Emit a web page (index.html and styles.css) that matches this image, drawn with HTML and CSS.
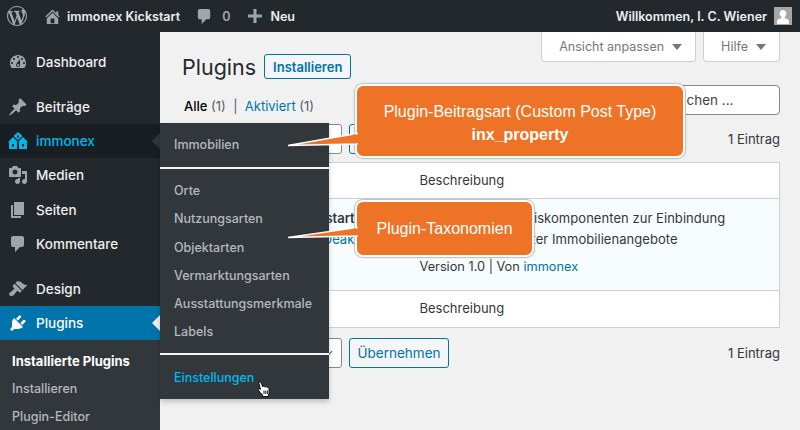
FILE: index.html
```html
<!DOCTYPE html>
<html lang="de">
<head>
<meta charset="UTF-8" />
<meta name="viewport" content="width=device-width, initial-scale=1" />
<title>Plugins - immonex Kickstart</title>
<link rel="stylesheet" href="styles.css">
</head>
<body>

<header class="adminbar">
  <svg class="bar-logo" viewBox="0 0 20 20"><path d="M20 10c0-5.51-4.49-10-10-10C4.48 0 0 4.49 0 10c0 5.52 4.48 10 10 10 5.51 0 10-4.48 10-10zM7.78 15.37L4.37 6.22c.55-.02 1.17-.08 1.17-.08.5-.06.44-1.13-.06-1.11 0 0-1.45.11-2.37.11-.18 0-.37 0-.58-.01C4.12 2.69 6.87 1.11 10 1.11c2.33 0 4.45.87 6.05 2.34-.68-.11-1.65.39-1.65 1.58 0 .74.45 1.36.9 2.1.35.61.55 1.36.55 2.46 0 1.49-1.4 5-1.4 5l-3.03-8.37c.54-.02.82-.17.82-.17.5-.05.44-1.25-.06-1.22 0 0-1.44.12-2.38.12-.87 0-2.33-.12-2.33-.12-.5-.03-.56 1.2-.06 1.22l.92.08 1.26 3.41zM17.41 10c.24-.64.74-1.87.43-4.25.7 1.29 1.05 2.71 1.05 4.25 0 3.29-1.73 6.24-4.4 7.78.97-2.59 1.94-5.2 2.92-7.78zM6.1 18.09C3.12 16.65 1.11 13.53 1.11 10c0-1.3.23-2.48.72-3.59C3.25 10.3 4.67 14.2 6.1 18.09zm4.03-6.63l2.58 6.98c-.86.29-1.76.45-2.71.45-.79 0-1.57-.11-2.29-.33.81-2.38 1.62-4.74 2.42-7.1z"/></svg>
  <svg class="bar-icon home" viewBox="0 0 20 20"><path d="M16 8.5l1.53 1.53-1.06 1.06L10 4.62l-6.47 6.47-1.06-1.06L10 2.5l4 4v-2h2v4zm-6-2.46l6 5.99V18H4v-5.97zM12 17v-5H8v5h4z"/></svg>
  <span class="site-name">immonex Kickstart</span>
  <svg class="bar-icon bubble" viewBox="0 0 20 20"><path d="M5 2h9c1.1 0 2 .9 2 2v7c0 1.1-.9 2-2 2h-2l-5 5v-5H5c-1.1 0-2-.9-2-2V4c0-1.1.9-2 2-2z"/></svg>
  <span class="count">0</span>
  <svg class="bar-icon plus" viewBox="0 0 14 14"><path d="M5.5 0h3v5.500H14v3H8.500V14h-3V8.500H0v-3h5.500z"/></svg>
  <span class="new">Neu</span>
  <span class="welcome">Willkommen, I. C. Wiener</span>
  <span class="avatar">
    <svg viewBox="0 0 18 18"><path d="M9 3c2 0 3.300 1.500 3.300 3.600 0 1.500-.7 2.800-1.700 3.500v1c2 .6 4.400 1.500 4.400 3.100V17H3v-2.800c0-1.600 2.400-2.500 4.400-3.100v-1c-1-.7-1.700-2-1.700-3.500C5.700 4.500 7 3 9 3z"/></svg>
  </span>
</header>

<div class="layout">
  <nav class="sidebar">
    <a class="menu-item">
      <svg viewBox="0 0 20 20"><path d="M3.76 16h12.480c1.100-1.370 1.760-3.110 1.760-5 0-4.420-3.580-8-8-8s-8 3.580-8 8c0 1.890.66 3.630 1.760 5zM10 4c.55 0 1 .45 1 1s-.45 1-1 1-1-.45-1-1 .45-1 1-1zM6 6c.55 0 1 .45 1 1s-.45 1-1 1-1-.45-1-1 .45-1 1-1zm8 0c.55 0 1 .45 1 1s-.45 1-1 1-1-.45-1-1 .45-1 1-1zm-5.370 5.550L12 7v6c0 1.100-.9 2-2 2s-2-.9-2-2c0-.57.24-1.080.63-1.450zM4 10c.55 0 1 .45 1 1s-.45 1-1 1-1-.45-1-1 .45-1 1-1zm12 0c.55 0 1 .45 1 1s-.45 1-1 1-1-.45-1-1 .45-1 1-1zm-5 3c0-.55-.45-1-1-1s-1 .45-1 1 .45 1 1 1 1-.45 1-1z"/></svg>
      Dashboard
    </a>
    <a class="menu-item gap-top">
      <svg viewBox="0 0 20 20"><path d="M10.440 3.020l1.820-1.820 6.360 6.350-1.830 1.820c-1.050-.68-2.480-.57-3.410.36l-.75.75c-.92.93-1.040 2.350-.35 3.410l-1.830 1.820-2.410-2.410-2.800 2.790c-.42.42-3.380 2.710-3.800 2.290s1.860-3.390 2.280-3.810l2.790-2.790L4.100 9.360l1.830-1.820c1.050.69 2.480.57 3.400-.36l.75-.75c.93-.92 1.050-2.350.36-3.410z"/></svg>
      Beiträge
    </a>
    <a class="menu-item hovered">
      <svg class="immonex-logo" viewBox="0 0 20 17"><path fill-rule="evenodd" d="M10 0l4 3.500v1L10 8 6 4.500v-1zM9 3.500v2h2v-2zM5 5l4.500 4.500v.5H9v7H1v-7H.5v-.5zM4 12v2.500h2V12zM15 5l4.500 4.500v.5H19v7h-8v-7h-.5v-.5zM14 12v2.500h2V12z"/></svg>
      immonex
    </a>
    <a class="menu-item">
      <svg viewBox="0 0 20 20"><path d="M13 11V4c0-.55-.45-1-1-1h-1.670L9 1H5L3.670 3H2c-.55 0-1 .45-1 1v7c0 .55.45 1 1 1h10c.55 0 1-.45 1-1zM7 4.500c1.380 0 2.500 1.120 2.500 2.500S8.380 9.500 7 9.500 4.500 8.380 4.500 7 5.620 4.500 7 4.500zM14 6h5v10.500c0 1.380-1.120 2.500-2.500 2.500S14 17.880 14 16.500s1.120-2.500 2.500-2.500c.17 0 .34.020.5.050V9h-3V6zm-4 8.050V13h2v3.500c0 1.380-1.120 2.500-2.500 2.500S7 17.880 7 16.500 8.120 14 9.500 14c.17 0 .34.020.5.050z"/></svg>
      Medien
    </a>
    <a class="menu-item">
      <svg viewBox="0 0 20 20"><path d="M6 15V2h10v13H6zm-1 1h8v2H3V5h2v11z"/></svg>
      Seiten
    </a>
    <a class="menu-item">
      <svg viewBox="0 0 20 20"><path d="M5 2h9c1.100 0 2 .9 2 2v7c0 1.100-.9 2-2 2h-2l-5 5v-5H5c-1.100 0-2-.9-2-2V4c0-1.100.9-2 2-2z"/></svg>
      Kommentare
    </a>
    <a class="menu-item gap-top">
      <svg viewBox="0 0 20 20"><path d="M14.480 11.060L7.410 3.990l1.500-1.500c.5-.56 2.300-.47 3.510.32 1.210.8 1.430 1.280 2.910 2.100 1.180.64 2.450 1.260 4.450.85zm-.71.71L6.700 4.700 4.930 6.470c-.39.39-.39 1.020 0 1.410l1.060 1.060c.39.39.39 1.030 0 1.420-.6.6-1.430 1.110-2.210 1.690-.35.26-.7.53-1.010.84C1.430 13.230.4 14.980 1.800 16.380c1.400 1.400 3.150.37 4.490-.97.31-.31.58-.66.84-1.010.58-.78 1.090-1.610 1.690-2.210.39-.39 1.030-.39 1.420 0l1.060 1.060c.39.39 1.020.39 1.410 0z"/></svg>
      Design
    </a>
    <a class="menu-item current">
      <svg viewBox="0 0 20 20"><path d="M13.110 4.360L9.870 7.600 8 5.730l3.240-3.240c.35-.34 1.050-.2 1.560.32.52.51.66 1.210.31 1.550zm-8 1.770l.91-1.120 9.010 9.010-1.190.84c-.71.71-2.630 1.160-3.820 1.160H6.140L4.900 17.260c-.59.59-1.540.59-2.120 0-.59-.58-.59-1.530 0-2.120l1.240-1.240v-3.880c0-1.130.4-3.190 1.090-3.890zm7.260 3.970l3.240-3.240c.34-.35 1.040-.21 1.550.31.52.51.66 1.210.31 1.550l-3.240 3.250z"/></svg>
      Plugins
    </a>
    <div class="submenu">
      <a class="active">Installierte Plugins</a>
      <a>Installieren</a>
      <a>Plugin-Editor</a>
    </div>
  </nav>

  <main class="content">
    <div class="screen-tabs">
      <span class="tab">Ansicht anpassen <i class="caret"></i></span>
      <span class="tab">Hilfe <i class="caret"></i></span>
    </div>

    <div class="title-row">
      <h1>Plugins</h1>
      <a class="btn title-btn">Installieren</a>
    </div>

    <div class="filter-row">
      <p class="views"><b>Alle</b> (1) &nbsp;|&nbsp; <a>Aktiviert</a> (1)</p>
      <div class="search">Plugins suchen ...</div>
    </div>

    <div class="tablenav top">
      <div class="select"></div>
      <a class="btn"></a>
      <span class="num">1 Eintrag</span>
    </div>

    <table class="plugins">
      <tr class="head"><td class="col-name"></td><td>Beschreibung</td></tr>
      <tr class="plugin-row">
        <td class="col-name">
          <strong>immonex Kickstart</strong>
          <span class="actions"><a>Einstellungen</a> | <a>Deaktivieren</a></span>
        </td>
        <td>
          <p class="desc">Plugin mit den Basiskomponenten zur Einbindung<br>OpenImmo-basierter Immobilienangebote</p>
          <p class="meta">Version 1.0 | Von <a>immonex</a></p>
        </td>
      </tr>
      <tr class="head last"><td class="col-name"></td><td>Beschreibung</td></tr>
    </table>

    <div class="tablenav bottom">
      <div class="select"></div>
      <a class="btn">Übernehmen</a>
      <span class="num">1 Eintrag</span>
    </div>
  </main>
</div>

<div class="flyout">
  <a>Immobilien</a>
  <hr>
  <a>Orte</a>
  <a>Nutzungsarten</a>
  <a>Objektarten</a>
  <a>Vermarktungsarten</a>
  <a>Ausstattungsmerkmale</a>
  <a>Labels</a>
  <hr class="second">
  <a class="fly-link">Einstellungen</a>
  <svg class="hand" viewBox="0 0 14 17"><path d="M2.500 1c.7-.3 1.300.1 1.600.8L5.500 5.500l.5-.2c.6-.2 1.100 0 1.300.4.500-.3 1.200-.2 1.500.3.600-.3 1.300-.1 1.600.4.700-.2 1.400.2 1.500 1l.3 3.600c0 1-.3 2-.8 2.800v1.700H5.600v-1.500C4 12.500 2.800 11 1.600 9.300c-.4-.6-.2-1.300.4-1.500.5-.2 1 .1 1.500.6L2 2.600C1.800 1.900 2 1.300 2.500 1z" fill="#fff" stroke="#000" stroke-width=".9"/><path d="M7 9.500v3.500M8.800 9.500v3.500M10.600 9.500v3.500" stroke="#000" stroke-width=".9"/></svg>
</div>

<div class="callout callout-type">
  <svg class="pointer" viewBox="0 0 72 14"><polygon points="0,12.500 69,.5 69,11" fill="#ee7326" stroke="#fff" stroke-width="1.500"/><rect x="65" y="1.500" width="7" height="8.500" fill="#ee7326"/></svg>
  <p>Plugin-Beitragsart (Custom Post Type)</p>
  <p class="strong">inx_property</p>
</div>

<div class="callout callout-tax">
  <svg class="pointer" viewBox="0 0 72 14"><polygon points="0,10.500 69,.5 69,9" fill="#ee7326" stroke="#fff" stroke-width="1.500"/><rect x="65" y="1.500" width="7" height="6.500" fill="#ee7326"/></svg>
  <p>Plugin-Taxonomien</p>
</div>

</body>
</html>
```

FILE: styles.css
```css
* {
  box-sizing: border-box;
}
html, body {
  height: 430px;
  overflow: hidden;
}
body {
  margin: 0;
  position: relative;
  background: #f1f1f1;
  color: #32373c;
  font-family: Inter, 'Noto Sans', sans-serif;
  font-size: 13px;
}
a {
  color: #0073aa;
}
p {
  margin: 0;
}

/* admin bar */
.adminbar {
  height: 32px;
  background: #23282d;
  color: #eee;
  display: flex;
  align-items: center;
  padding: 0 8px 0 7px;
  font-weight: 600;
  font-size: 12.5px;
}
.adminbar svg {
  fill: #a0a5aa;
}
.bar-logo {
  width: 20px;
  height: 20px;
}
.bar-icon {
  width: 19px;
  height: 19px;
}
.home {
  margin-left: 16px;
}
.site-name {
  margin-left: 5px;
}
.bubble {
  margin-left: 15px;
}
.count {
  margin-left: 8px;
  color: #a0a5aa;
}
.plus {
  width: 14px;
  height: 14px;
  margin-left: 18px;
}
.new {
  margin-left: 8px;
}
.welcome {
  margin-left: auto;
}
.avatar {
  width: 18px;
  height: 18px;
  margin-left: 7px;
  background: #a7a7a7;
  display: block;
}
.adminbar .avatar svg {
  display: block;
  fill: #fff;
}

.layout {
  display: flex;
  height: 398px;
}

/* left menu */
.sidebar {
  width: 160px;
  flex: none;
  background: #23282d;
  padding-top: 13px;
  overflow: hidden;
}
.menu-item {
  height: 34.4px;
  display: flex;
  align-items: center;
  gap: 8px;
  padding-left: 8px;
  color: #eee;
  font-size: 13.5px;
  font-weight: 500;
  position: relative;
}
.menu-item svg {
  width: 20px;
  height: 20px;
  fill: #a0a5aa;
}
.gap-top {
  margin-top: 10px;
}
.hovered {
  background: #191e23;
  color: #00b9eb;
}
.menu-item .immonex-logo {
  fill: #00b9eb;
  height: 17px;
}
.hovered::after,
.current::after {
  content: "";
  position: absolute;
  right: 0;
  top: 50%;
  margin-top: -8px;
  border: 8px solid transparent;
  border-left: 0;
  border-right-color: #32373c;
}
.current {
  background: #0073aa;
  color: #fff;
}
.current svg {
  fill: #fff;
}
.current::after {
  border-right-color: #f1f1f1;
}
.submenu {
  background: #32373c;
  padding-top: 7px;
  height: 100px;
}
.submenu a {
  display: block;
  height: 28px;
  line-height: 28px;
  padding-left: 12px;
  color: #b4b9be;
  font-size: 12.5px;
  font-weight: 500;
}
.submenu .active {
  color: #fff;
  font-size: 13px;
  font-weight: 700;
}

/* main area */
.content {
  flex: 1;
  min-width: 0;
  padding: 0 20px 0 22px;
}
.screen-tabs {
  display: flex;
  justify-content: flex-end;
  gap: 7px;
}
.tab {
  height: 30px;
  padding: 0 13px 0 17px;
  display: flex;
  align-items: center;
  gap: 8px;
  background: #fff;
  border: 1px solid #ccd0d4;
  border-top: 0;
  border-radius: 0 0 4px 4px;
  color: #72777c;
  font-size: 12.5px;
}
.caret {
  border: 5px solid transparent;
  border-bottom: 0;
  border-top: 6px solid #72777c;
}
.title-row {
  display: flex;
  align-items: center;
  gap: 8px;
  margin-top: -16px;
  height: 41px;
}
h1 {
  margin: 0;
  font-size: 21.5px;
  font-weight: 400;
  color: #23282d;
}
.btn {
  display: flex;
  align-items: center;
  height: 30px;
  padding: 0 10px;
  background: #f3f5f6;
  border: 1px solid #0073aa;
  border-radius: 3px;
  font-size: 13.5px;
}
.title-btn {
  height: 25px;
  padding: 0 8px;
  font-size: 13px;
  font-weight: 600;
}
.filter-row {
  display: flex;
  justify-content: space-between;
  align-items: flex-start;
  height: 36px;
}
.views {
  font-size: 13px;
  line-height: 16px;
  color: #555d66;
  margin-top: 11px;
  padding-left: 2px;
}
.views b {
  font-weight: 500;
  color: #000;
}
.search {
  width: 160px;
  height: 30px;
  background: #fff;
  border: 1px solid #7e8993;
  border-radius: 4px;
  padding-right: 48px;
  line-height: 28px;
  font-size: 13.5px;
  color: #444;
  text-align: right;
  white-space: nowrap;
  overflow: hidden;
  margin-top: -2px;
}
.tablenav {
  display: flex;
  align-items: center;
  gap: 7px;
  height: 30px;
}
.tablenav.top {
  margin-top: 1px;
}
.select {
  position: relative;
  width: 160px;
  height: 30px;
  background: #fff;
  border: 1px solid #7e8993;
  border-radius: 3px;
}
.select::after {
  content: "";
  position: absolute;
  right: 10px;
  top: 9px;
  width: 6px;
  height: 6px;
  border-right: 1.5px solid #555;
  border-bottom: 1.5px solid #555;
  transform: rotate(45deg);
}
.tablenav .btn {
  width: 100px;
  justify-content: center;
}
.num {
  margin-left: auto;
  font-size: 13px;
}
.tablenav.bottom {
  margin-top: 10px;
}

/* plugin table */
.plugins {
  width: 100%;
  margin-top: 8px;
  border-collapse: collapse;
  background: #fff;
  border: 1px solid #ccd0d4;
  table-layout: fixed;
}
.plugins td {
  padding: 0;
  vertical-align: top;
  font-size: 13px;
}
.plugins .col-name {
  width: 237px;
  padding-left: 46px;
}
.head td {
  height: 36px;
  line-height: 35px;
  border-bottom: 1px solid #ccd0d4;
}
.head.last td {
  height: 37px;
  border-bottom: 0;
}
.plugins .plugin-row td {
  height: 92px;
  padding-top: 9px;
  background: #f7fcfe;
  border-bottom: 1px solid #ccd0d4;
  line-height: 21px;
}
.plugin-row strong {
  display: block;
  margin-left: 8px;
  font-weight: 600;
  white-space: nowrap;
}
.actions {
  display: block;
  white-space: nowrap;
  color: #666;
}
.desc {
  white-space: nowrap;
  letter-spacing: 0.05px;
}
.meta {
  margin-top: 6px;
  font-size: 12.75px;
}

/* flyout menu */
.flyout {
  position: absolute;
  left: 160px;
  top: 123px;
  width: 169px;
  height: 276px;
  background: #32373c;
  box-shadow: 0 3px 5px rgba(0, 0, 0, 0.2);
  padding-top: 8px;
}
.flyout a {
  display: block;
  height: 28.2px;
  line-height: 28px;
  padding-left: 14px;
  color: #b4b9be;
  font-size: 12.5px;
  font-weight: 500;
  white-space: nowrap;
}
.flyout hr {
  height: 2px;
  margin: 8px 0;
  border: 0;
  background: #f4f4f4;
}
.flyout hr.second {
  margin: 7px 0 8.5px;
}
.flyout .fly-link {
  color: #00b9eb;
}
.hand {
  position: absolute;
  left: 97px;
  top: 258px;
  width: 14px;
  height: 17px;
}

/* callouts */
.callout {
  position: absolute;
  left: 355px;
  background: #ee7326;
  border: 2px solid #fff;
  border-radius: 8px;
  box-shadow: 0 0 0 1px #c4c4c4, 0 0 3px rgba(0, 0, 0, 0.2);
  color: #fff;
  text-align: center;
  font-family: 'Liberation Sans', Arial, sans-serif;
  font-size: 16px;
  line-height: 23px;
  display: flex;
  flex-direction: column;
  justify-content: center;
}
.callout .strong {
  font-weight: 700;
}
.pointer {
  position: absolute;
  left: -69px;
  width: 72px;
  height: 14px;
  overflow: visible;
}
.callout-type {
  top: 84px;
  width: 330px;
  height: 74px;
  padding-top: 3px;
}
.callout-type .pointer {
  top: 47px;
}
.callout-tax {
  top: 200px;
  width: 179px;
  height: 57px;
}
.callout-tax .pointer {
  top: 25px;
}
```
